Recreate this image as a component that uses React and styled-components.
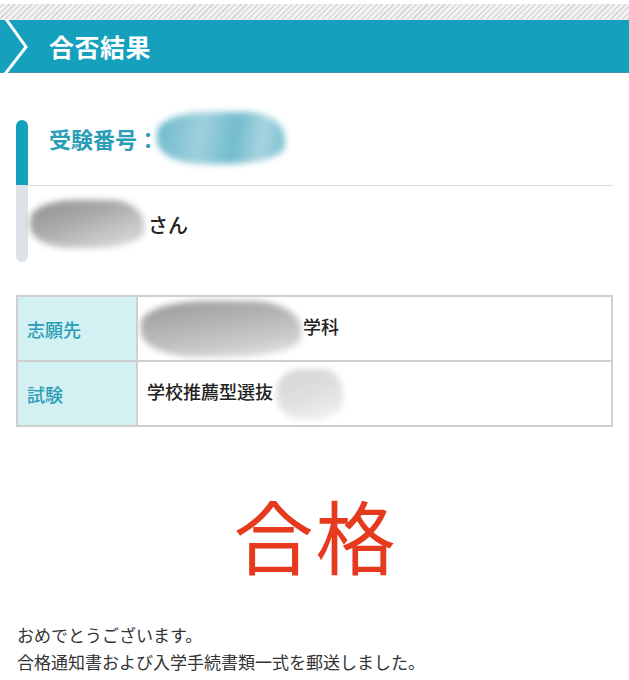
import React from 'react';
import styled, { createGlobalStyle } from 'styled-components';

const GlobalStyle = createGlobalStyle`
  html, body {
    margin: 0;
    padding: 0;
    background: #ffffff;
  }
  body {
    font-family: "Noto Sans CJK JP", "Noto Sans", sans-serif;
    color: #222;
  }
`;

const Page = styled.div`
  width: 629px;
  padding-top: 4px;
`;

const Stripes = styled.div`
  height: 15px;
  background: repeating-linear-gradient(
    -45deg,
    #d9d9d9 0px,
    #d9d9d9 1.5px,
    #f3f3f3 1.5px,
    #f3f3f3 4px
  );
  border-bottom: 1px solid #ececec;
`;

const TitleBar = styled.header`
  height: 53px;
  background: #15a1bd;
  border-bottom: 1px solid #3b95a9;
  box-sizing: border-box;
  display: flex;
  align-items: center;
`;

const Chevron = styled.svg`
  width: 30px;
  height: 53px;
  flex-shrink: 0;
`;

const Title = styled.h1`
  margin: 0 0 0 19px;
  font-size: 25px;
  font-weight: 700;
  color: #ffffff;
  letter-spacing: 0.5px;
  line-height: 1;
`;

const Profile = styled.section`
  margin: 47px 16px 0 16px;
  display: flex;
`;

const SideBar = styled.div`
  width: 12px;
  height: 142px;
  border-radius: 6px;
  background: linear-gradient(to bottom, #15a1bd 0, #15a1bd 65px, #dde3e8 65px);
  flex-shrink: 0;
`;

const ProfileBody = styled.div`
  flex: 1;
  display: flex;
  flex-direction: column;
`;

const ProfileRow = styled.div`
  display: flex;
  align-items: ${(p) => (p.$top ? 'flex-start' : 'center')};
  height: ${(p) => p.$h}px;
  padding-left: ${(p) => p.$pl}px;
  border-bottom: ${(p) => (p.$line ? '1.5px solid #dedede' : 'none')};
  box-sizing: border-box;
`;

const ExamNo = styled.span`
  font-size: 22px;
  font-weight: 700;
  color: #2a9db7;
  line-height: 36px;
`;

const Name = styled.span`
  font-size: 20px;
  font-weight: 500;
  color: #222;
`;

const Smear = styled.span`
  display: inline-block;
  width: ${(p) => p.$w}px;
  height: ${(p) => p.$h}px;
  margin: ${(p) => p.$m || '0'};
  background: ${(p) => p.$bg};
  filter: blur(3px);
  border-radius: 40% 30% 45% 35% / 40% 50% 35% 45%;
  opacity: ${(p) => p.$o || 1};
  vertical-align: middle;
`;

const Table = styled.table`
  margin: 33px 16px 0 16px;
  width: 597px;
  border-collapse: collapse;
  table-layout: fixed;
`;

const Th = styled.th`
  box-sizing: border-box;
  width: 120px;
  height: 63px;
  background: #d3f0f2;
  border: 2px solid #cfcfcf;
  text-align: left;
  padding: 0 0 0 9px;
  font-size: 18px;
  font-weight: 500;
  color: #2a9db7;
`;

const Td = styled.td`
  height: 63px;
  border: 2px solid #cfcfcf;
  padding: 0 0 0 9px;
  font-size: 18px;
  font-weight: 500;
  color: #222;
  white-space: nowrap;
  overflow: hidden;
`;

const Result = styled.div`
  margin-top: 66px;
  text-align: center;
  font-size: 80px;
  font-weight: 400;
  color: #e63a1f;
  line-height: 1;
  letter-spacing: 2px;
  padding-left: 2px;
`;

const Message = styled.p`
  margin: 48px 0 0 17px;
  font-size: 17px;
  line-height: 27px;
  color: #333;
`;

export default function App() {
  return (
    <>
      <GlobalStyle />
      <Page>
        <Stripes />
        <TitleBar>
          <Chevron viewBox="0 0 30 53">
            <polyline
              points="6,-1 26,27 5,54"
              fill="none"
              stroke="#ffffff"
              strokeWidth="3"
            />
          </Chevron>
          <Title>合否結果</Title>
        </TitleBar>

        <Profile>
          <SideBar />
          <ProfileBody>
            <ProfileRow $h={66} $pl={21} $top $line>
              <ExamNo>受験番号：</ExamNo>
              <Smear
                $w={128}
                $h={52}
                $m="-8px 0 0 -2px"
                $bg="linear-gradient(100deg, #6bb9cc 0%, #9fd0dc 35%, #72bccd 60%, #a7d4df 80%, #78bfd0 100%)"
              />
            </ProfileRow>
            <ProfileRow $h={76} $pl={2}>
              <Smear
                $w={114}
                $h={48}
                $m="0 4px 0 0"
                $bg="linear-gradient(160deg, #8f8f8f 0%, #a9a9a9 40%, #c6c6c6 70%, #e0e0e0 100%)"
              />
              <Name>さん</Name>
            </ProfileRow>
          </ProfileBody>
        </Profile>

        <Table>
          <tbody>
            <tr>
              <Th>志願先</Th>
              <Td>
                <Smear
                  $w={160}
                  $h={56}
                  $m="0 2px 0 -6px"
                  $bg="linear-gradient(170deg, #999 0%, #b3b3b3 40%, #c9c9c9 70%, #e8e8e8 100%)"
                />
                学科
              </Td>
            </tr>
            <tr>
              <Th>試験</Th>
              <Td>
                学校推薦型選抜
                <Smear
                  $w={66}
                  $h={50}
                  $m="0 0 0 4px"
                  $o={0.8}
                  $bg="linear-gradient(160deg, #c8c8c8 0%, #d8d8d8 50%, #eeeeee 100%)"
                />
              </Td>
            </tr>
          </tbody>
        </Table>

        <Result>合格</Result>

        <Message>
          おめでとうございます。
          <br />
          合格通知書および入学手続書類一式を郵送しました。
        </Message>
      </Page>
    </>
  );
}
